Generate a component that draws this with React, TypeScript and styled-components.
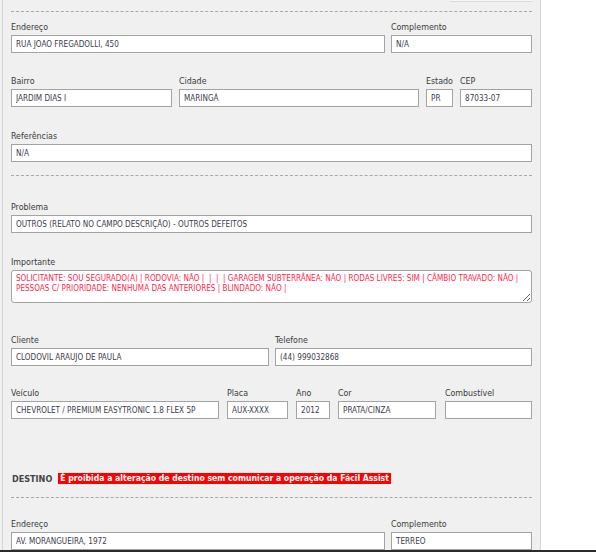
import React from 'react';
import styled, {createGlobalStyle} from 'styled-components';

const GlobalStyle = createGlobalStyle`
  html, body {
    margin: 0;
    padding: 0;
    background: #ffffff;
  }
  body {
    font-family: "DejaVu Sans Condensed", "DejaVu Sans", sans-serif;
  }
`;

const Page = styled.div`
  width: 596px;
  height: 552px;
  overflow: hidden;
  display: flex;
  flex-direction: column;
  background: #ffffff;
`;

const Panel = styled.div`
  width: 541px;
  flex: 1;
  box-sizing: border-box;
  background: #f0f0f0;
  padding-left: 2px;
  display: flex;
`;

const Inner = styled.div`
  flex: 1;
  border-left: 1px solid #d4d4d4;
  border-right: 1px solid #d6d6d6;
  padding: 0 8px 0 8px;
  display: flex;
  flex-direction: column;
`;

const BottomEdge = styled.div`
  height: 2px;
  background: #2b2b2b;
`;

const TopStrip = styled.div`
  height: 2px;
  display: flex;
  justify-content: flex-end;
`;

const TopButtonEdge = styled.div`
  width: 82px;
  height: 1px;
  background: #f6f6f6;
  border-bottom: 1px solid #d9d9d9;
`;

const Dashed = styled.div<{$top: number}>`
  margin-top: ${p => p.$top}px;
  height: 0;
  border-top: 1px dashed #a8a8a8;
  width: 521px;
`;

const Row = styled.div<{$top: number}>`
  margin-top: ${p => p.$top}px;
  display: flex;
  align-items: flex-end;
`;

const Field = styled.div<{$w: number; $gap?: number}>`
  width: ${p => p.$w}px;
  margin-right: ${p => p.$gap ?? 0}px;
  display: flex;
  flex-direction: column;
`;

const Label = styled.label`
  font-size: 8.8px;
  line-height: 14px;
  height: 14px;
  color: #3a3a3a;
  margin-bottom: 1px;
  white-space: nowrap;
`;

const Input = styled.input`
  box-sizing: border-box;
  width: 100%;
  height: 18px;
  margin: 0;
  border: 1px solid #a3a3a3;
  background: #ffffff;
  padding: 0 4px;
  font-family: "DejaVu Sans Condensed", "DejaVu Sans", sans-serif;
  font-size: 8.1px;
  color: #3c3c4c;
  outline: none;
`;

const TextArea = styled.textarea`
  box-sizing: border-box;
  width: 100%;
  height: 33px;
  margin: 0;
  border: 1px solid #a3a3a3;
  border-radius: 3px;
  background: #ffffff;
  padding: 2px 4px;
  font-family: "DejaVu Sans Condensed", "DejaVu Sans", sans-serif;
  font-size: 8.1px;
  line-height: 10px;
  color: #ff1f4f;
  outline: none;
  resize: vertical;
  overflow: hidden;
`;

const DestinoRow = styled.div`
  margin-top: 53px;
  display: flex;
  align-items: center;
  gap: 6px;
  height: 13px;
  padding-left: 1px;
`;

const DestinoTitle = styled.span`
  font-size: 9px;
  font-weight: bold;
  color: #444444;
`;

const Warning = styled.span`
  background: #ff0000;
  color: #ffffff;
  font-size: 8.6px;
  font-weight: bold;
  line-height: 11px;
  padding: 0 2px;
  white-space: nowrap;
`;

type F = {label: string; value: string; w: number; gap?: number};

function Fields({items, top}: {items: F[]; top: number}) {
  return (
    <Row $top={top}>
      {items.map(f => (
        <Field key={f.label} $w={f.w} $gap={f.gap}>
          <Label>{f.label}</Label>
          <Input readOnly value={f.value} />
        </Field>
      ))}
    </Row>
  );
}

const importante =
  'SOLICITANTE: SOU SEGURADO(A) | RODOVIA: NÃO |  |  |  | GARAGEM SUBTERRÂNEA: NÃO | RODAS LIVRES: SIM | CÂMBIO TRAVADO: NÃO | PESSOAS C/ PRIORIDADE: NENHUMA DAS ANTERIORES | BLINDADO: NÃO |';

export default function App() {
  return (
    <Page>
      <GlobalStyle />
      <Panel>
        <Inner>
          <TopStrip>
            <TopButtonEdge />
          </TopStrip>
          <Dashed $top={9} />
          <Fields top={8} items={[
            {label: 'Endereço', value: 'RUA JOAO FREGADOLLI, 450', w: 374, gap: 6},
            {label: 'Complemento', value: 'N/A', w: 141},
          ]} />
          <Fields top={21} items={[
            {label: 'Bairro', value: 'JARDIM DIAS I', w: 161, gap: 7},
            {label: 'Cidade', value: 'MARINGÁ', w: 240, gap: 7},
            {label: 'Estado', value: 'PR', w: 27, gap: 7},
            {label: 'CEP', value: '87033-07', w: 72},
          ]} />
          <Fields top={22} items={[
            {label: 'Referências', value: 'N/A', w: 521},
          ]} />
          <Dashed $top={13} />
          <Fields top={24} items={[
            {label: 'Problema', value: 'OUTROS (RELATO NO CAMPO DESCRIÇÃO) - OUTROS DEFEITOS', w: 521},
          ]} />
          <Row $top={22}>
            <Field $w={521}>
              <Label>Importante</Label>
              <TextArea readOnly value={importante} />
            </Field>
          </Row>
          <Fields top={30} items={[
            {label: 'Cliente', value: 'CLODOVIL ARAUJO DE PAULA', w: 258, gap: 6},
            {label: 'Telefone', value: '(44) 999032868', w: 257},
          ]} />
          <Fields top={20} items={[
            {label: 'Veículo', value: 'CHEVROLET / PREMIUM EASYTRONIC 1.8 FLEX 5P', w: 208, gap: 8},
            {label: 'Placa', value: 'AUX-XXXX', w: 61, gap: 8},
            {label: 'Ano', value: '2012', w: 34, gap: 8},
            {label: 'Cor', value: 'PRATA/CINZA', w: 98, gap: 9},
            {label: 'Combustível', value: '', w: 87},
          ]} />
          <DestinoRow>
            <DestinoTitle>DESTINO</DestinoTitle>
            <Warning>É proibida a alteração de destino sem comunicar a operação da Fácil Assist</Warning>
          </DestinoRow>
          <Dashed $top={12} />
          <Fields top={19} items={[
            {label: 'Endereço', value: 'AV. MORANGUEIRA, 1972', w: 374, gap: 6},
            {label: 'Complemento', value: 'TERREO', w: 141},
          ]} />
        </Inner>
      </Panel>
      <BottomEdge />
    </Page>
  );
}
